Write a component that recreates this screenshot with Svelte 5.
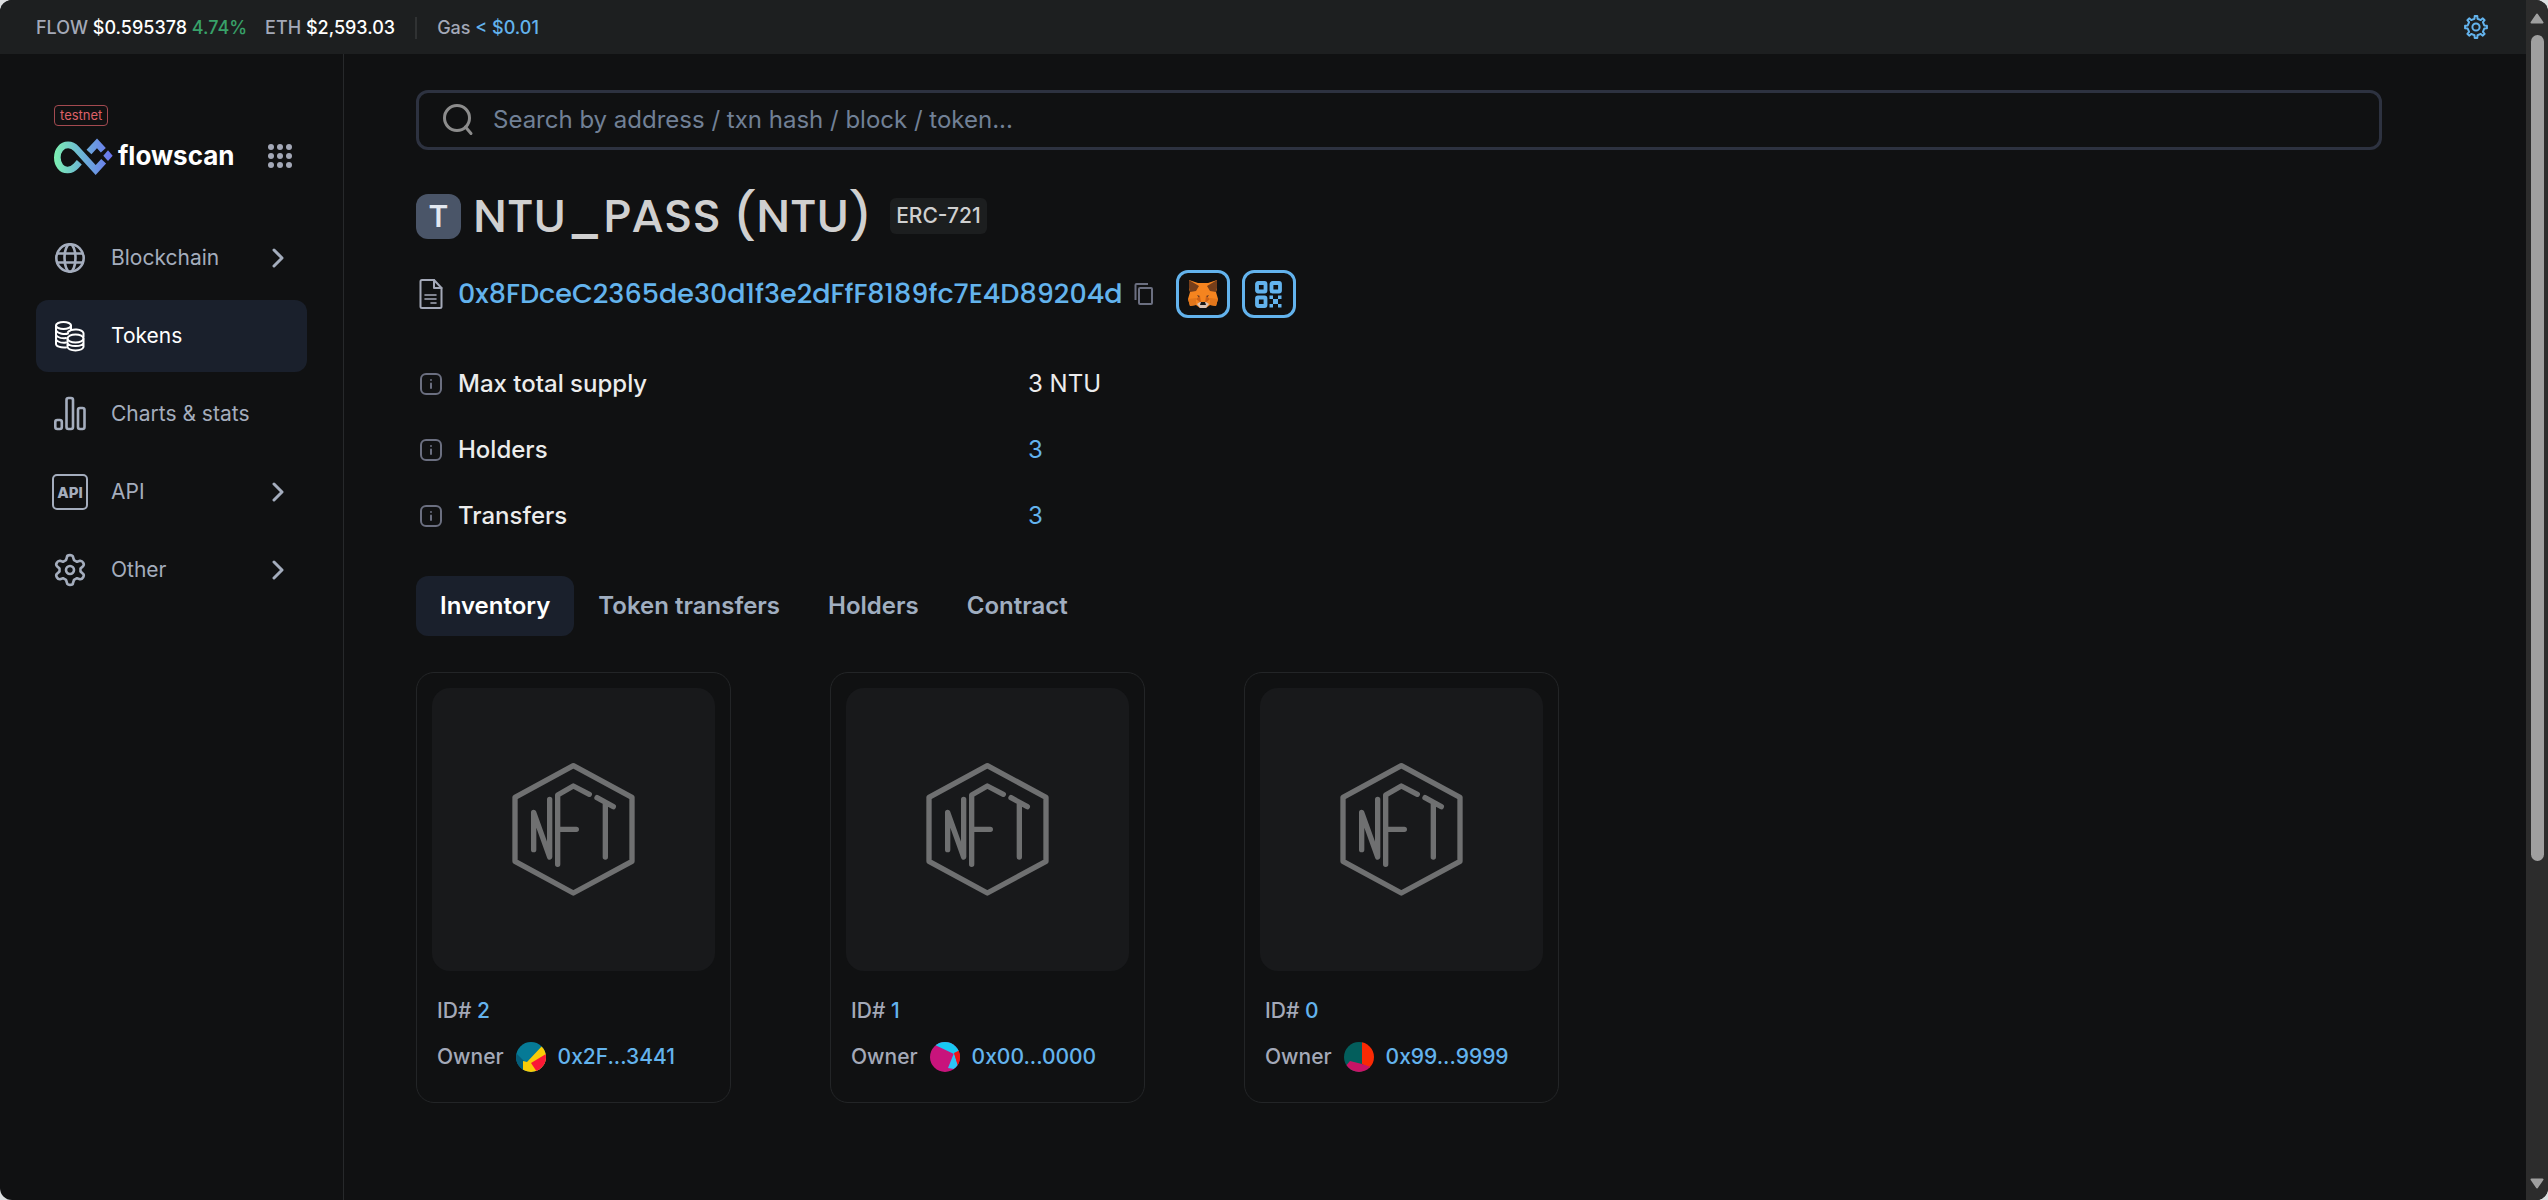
<script lang="ts">
	type NavItem = {
		label: string;
		icon: string;
		expandable: boolean;
	};

	type Nft = {
		id: number;
		owner: string;
	};

	const NAV: NavItem[] = [
		{ label: 'Blockchain', icon: 'globe', expandable: true },
		{ label: 'Tokens', icon: 'coins', expandable: false },
		{ label: 'Charts & stats', icon: 'chart', expandable: false },
		{ label: 'API', icon: 'api', expandable: true },
		{ label: 'Other', icon: 'gear', expandable: true },
	];

	const DETAILS = [
		{ label: 'Max total supply', value: '3 NTU', link: false },
		{ label: 'Holders', value: '3', link: true },
		{ label: 'Transfers', value: '3', link: true },
	];

	const TABS = ['Inventory', 'Token transfers', 'Holders', 'Contract'];

	const ITEMS: Nft[] = [
		{ id: 2, owner: '0x2F...3441' },
		{ id: 1, owner: '0x00...0000' },
		{ id: 0, owner: '0x99...9999' },
	];

	const ADDRESS = '0x8FDceC2365de30d1f3e2dFfF8189fc7E4D89204d';

	let activeNav = $state('Tokens');
	let activeTab = $state('Inventory');
	let query = $state('');

	// Outline of a gear centred on 0,0. Half widths are fractions of one tooth's angle
	function gearPath(teeth: number, outer: number, inner: number, top: number, base: number): string {
		const step = (Math.PI * 2) / teeth;
		const points: string[] = [];
		for (let i = 0; i < teeth; i++) {
			const a = i * step - Math.PI / 2;
			for (const [r, k] of [[inner, -base], [outer, -top], [outer, top], [inner, base]]) {
				const t = a + k * step;
				points.push(`${(r * Math.cos(t)).toFixed(2)} ${(r * Math.sin(t)).toFixed(2)}`);
			}
		}
		return `M${points.join('L')}Z`;
	}

	const cog = gearPath(8, 11, 8.4, 0.15, 0.23);
</script>

<div class="window">
	<div class="page">
		<header class="topbar">
			<div class="prices">
				<span>FLOW <b>$0.595378</b> <em>4.74%</em></span>
				<span>ETH <b>$2,593.03</b></span>
				<i class="divider"></i>
				<span>Gas <a href="#gas">&lt; $0.01</a></span>
			</div>
			<button class="plain settings" aria-label="Settings">
				<svg viewBox="-12 -12 24 24" width="24" height="24" fill="none" stroke="currentColor" stroke-width="2" stroke-linejoin="round">
					<path d={cog} />
					<circle r="3.6" />
				</svg>
			</button>
		</header>

		<div class="body">
			<aside class="sidebar">
				<span class="network">testnet</span>
				<div class="brand">
					<a class="logo" href="#home">
						<svg viewBox="42 112 180 111" width="60" height="37" fill="none" stroke="url(#flow)" stroke-width="20">
							<defs>
								<linearGradient id="flow" gradientUnits="userSpaceOnUse" x1="42" y1="170" x2="216" y2="170">
									<stop offset="0" stop-color="#7cf0b0" />
									<stop offset="0.5" stop-color="#6cb2d8" />
									<stop offset="1" stop-color="#6a74f0" />
								</linearGradient>
							</defs>
							<path d="M118 185 L108 196 C94 211 72 212 61 198 C49 183 49 158 61 144 C73 129 95 129 109 144 L167 208 L191 182" />
							<path d="M147 154 L171 128 L190 149" />
							<path d="M204 149 L218 165 L204 181 L190 165Z" fill="url(#flow)" stroke="none" />
						</svg>
						<span>flowscan</span>
					</a>
					<button class="plain apps" aria-label="Apps">
						<svg viewBox="0 0 24 24" width="24" height="24" fill="currentColor">
							{#each [3, 12, 21] as y}
								{#each [3, 12, 21] as x}
									<circle cx={x} cy={y} r="3" />
								{/each}
							{/each}
						</svg>
					</button>
				</div>

				<nav>
					{#each NAV as item}
						<a
							class="nav-item"
							class:active={activeNav === item.label}
							href="#{item.icon}"
							onclick={() => (activeNav = item.label)}
						>
							<svg class="nav-icon" viewBox="-18 -18 36 36" width="36" height="36" fill="none" stroke="currentColor" stroke-width="2" stroke-linejoin="round" stroke-linecap="round">
								{#if item.icon === 'globe'}
									<g stroke-width="2.6">
										<circle r="13.7" />
										<ellipse rx="5.500" ry="13.7" />
										<path d="M-12.500 -4.500H12.500M-12.500 4.500H12.500" />
									</g>
								{:else if item.icon === 'coins'}
									<ellipse cx="-6.5" cy="-10.5" rx="7.5" ry="3.5" />
									<path d="M-14 -10.5V8C-14 10 -10 12 -4 11.500M1 -10.500V-6M-14 -5.500C-12 -2 -5 -1.500 -2 -2.500M-14 -1C-12 2 -7 2.500 -4 2M-14 3.500C-12 6.500 -7 7 -4 6.500" />
									<path d="M-2 -4C2 -8 12 -7 13.500 -3V1" />
									<ellipse cx="5.500" cy="2.500" rx="8" ry="4" />
									<path d="M-2.500 3V11C-1 15.500 12 15.500 13.500 11V3M-2.500 7C-1 11 12 11 13.500 7" />
								{:else if item.icon === 'chart'}
									<g stroke-width="2.6">
										<rect x="-14.700" y="6" width="6.500" height="9" rx="2" />
										<rect x="-3.500" y="-16" width="6.500" height="31" rx="2" />
										<rect x="8" y="-6" width="6.500" height="21" rx="2" />
									</g>
								{:else if item.icon === 'api'}
									<rect x="-17" y="-17" width="34" height="34" rx="4" />
									<text x="0" y="6" text-anchor="middle">API</text>
								{:else}
									<g stroke-width="2.6">
										<path d="M-3 -13C-3 -15.500 3 -15.500 3 -13L4 -9.800L7 -8.200L10 -9.200C12.500 -9.500 15 -5.500 13 -3.800L10.500 -1.500V1.500L13 3.800C15 5.500 12.500 9.500 10 9.200L7 8.200L4 9.800L3 13C3 15.500 -3 15.500 -3 13L-4 9.800L-7 8.200L-10 9.200C-12.500 9.500 -15 5.500 -13 3.800L-10.500 1.500V-1.500L-13 -3.800C-15 -5.500 -12.500 -9.500 -10 -9.200L-7 -8.200L-4 -9.800Z" />
										<circle r="4" />
									</g>
								{/if}
							</svg>
							<span>{item.label}</span>
							{#if item.expandable}
								<svg class="chevron" viewBox="0 0 12 20" width="12" height="20" fill="none" stroke="currentColor" stroke-width="3" stroke-linecap="round" stroke-linejoin="round">
									<path d="M2 2L10 10L2 18" />
								</svg>
							{/if}
						</a>
					{/each}
				</nav>
			</aside>

			<main>
				<label class="search">
					<svg viewBox="0 0 32 32" width="32" height="32" fill="none" stroke="currentColor" stroke-width="3" stroke-linecap="round">
						<circle cx="15" cy="14" r="12.500" />
						<path d="M23.500 23L29 29.500" />
					</svg>
					<input
						type="text"
						bind:value={query}
						aria-label="Search"
						placeholder="Search by address / txn hash / block / token..."
					/>
				</label>

				<div class="title">
					<span class="token-letter">T</span>
					<h1>NTU_PASS (NTU)</h1>
					<span class="standard">ERC-721</span>
				</div>

				<div class="address">
					<svg class="doc" viewBox="0 0 24 32" width="24" height="32" fill="none" stroke="currentColor" stroke-width="2" stroke-linejoin="round" stroke-linecap="round">
						<path d="M15 2H3Q1.500 2 1.500 3.500V28.500Q1.500 30 3 30H21Q22.500 30 22.500 28.500V10Z" />
						<path d="M15 2V10H22.500" />
						<path d="M6 17H17M6 21H17M12 25H17" stroke-width="1.600" />
					</svg>
					<a href="#address">{ADDRESS}</a>
					<button class="plain copy" aria-label="Copy address">
						<svg viewBox="0 0 20 24" width="20" height="24" fill="none" stroke="currentColor" stroke-width="2" stroke-linejoin="round">
							<rect x="5" y="6" width="13" height="16" rx="1" />
							<path d="M1.500 18V3Q1.500 2 2.500 2H14" />
						</svg>
					</button>
					<button class="outlined" aria-label="Add token to MetaMask">
						<svg viewBox="0 0 30 30" width="30" height="30">
							<path d="M1 1L10 4H20L29 1L29 10L28 13L30 20L28 27L22 26L18 29H12L8 26L2 27L0 20L2 13L1 10Z" fill="#f5841f" />
							<path d="M1 1L11 7L8 12L2 13L1 9ZM29 1L19 7L22 12L28 13L29 9Z" fill="#763e1a" />
							<path d="M0 20L8 19L8 26L2 27ZM30 20L22 19L22 26L28 27Z" fill="#e2761b" />
							<path d="M9 16L12 17L11 19ZM21 16L18 17L19 19Z" fill="#5d3b2b" />
							<path d="M12 17L13 24L8 20ZM18 17L17 24L22 20Z" fill="#cd6116" />
							<path d="M9 25L12 23H18L21 25L18 29H12Z" fill="#d7c1b3" />
							<path d="M13 23H17L18 26H12Z" fill="#161616" />
						</svg>
					</button>
					<button class="outlined" aria-label="Show QR code">
						<svg viewBox="0 0 27 27" width="27" height="27" fill="none" stroke="currentColor" stroke-width="3.8">
							<rect x="2" y="2" width="8.500" height="8.500" rx="1" />
							<rect x="16.500" y="2" width="8.500" height="8.500" rx="1" />
							<rect x="2" y="16.500" width="8.500" height="8.500" rx="1" />
							<path d="M14.500 14.500h3.500v3.500h-3.500zM18 18h5v5h-5zM23 14.500h3.500v3.500h-3.500zM14.500 23h3.500v3.500h-3.500zM23 23h3.500v3.500h-3.500z" fill="currentColor" stroke="none" />
						</svg>
					</button>
				</div>

				<dl>
					{#each DETAILS as row}
						<dt>
							<svg viewBox="0 0 24 24" width="24" height="24" fill="none" stroke="currentColor" stroke-width="2" stroke-linecap="round">
								<rect x="2" y="2" width="20" height="20" rx="5" />
								<path d="M12 11.500V16M12 8V8.100" />
							</svg>
							{row.label}
						</dt>
						<dd>
							{#if row.link}<a href="#{row.label}">{row.value}</a>{:else}{row.value}{/if}
						</dd>
					{/each}
				</dl>

				<div class="tabs" role="tablist">
					{#each TABS as tab}
						<button role="tab" aria-selected={activeTab === tab} onclick={() => (activeTab = tab)}>
							{tab}
						</button>
					{/each}
				</div>

				<div class="inventory">
					{#each ITEMS as item}
						<article>
							<a class="preview" href="#nft-{item.id}" aria-label="Token {item.id}">
								<svg viewBox="330 300 381 417" width="127" height="139" fill="none" stroke="currentColor" stroke-width="16" stroke-linecap="round" stroke-linejoin="round">
									<path d="M520 317L696 412V604L520 699L345 604V412Z" />
									<path d="M401 569V457L449 591V418" />
									<path d="M473 613V405L520 378L568 403M473 508H529" />
									<path d="M591 413L640 440M616 431V591" />
								</svg>
							</a>
							<p>ID# <a href="#nft-{item.id}">{item.id}</a></p>
							<p class="owner">
								Owner
								<svg class="avatar" viewBox="0 0 30 30" width="30" height="30">
									{#if item.id === 2}
										<path d="M0 0H30V30H0Z" fill="#067a96" />
										<path d="M0 11L8 19L8 30H0Z" fill="#055c78" />
										<path d="M7 19L11 20L27 3L30 8V30H7Z" fill="#f8cc08" />
										<path d="M15 21L30 12V30H21Z" fill="#fb1836" />
									{:else if item.id === 1}
										<path d="M0 0H30V30H0Z" fill="#c8147c" />
										<path d="M5 0H30V9L24 12L5 3Z" fill="#18c8f2" />
										<path d="M24 11L28 24L24 27L18 26Z" fill="#2cc4f6" />
										<path d="M24 11L30 8V23L28 24Z" fill="#ee1414" />
									{:else}
										<path d="M0 0H18V30H0Z" fill="#035e5c" />
										<path d="M18 0H30V30L18 22Z" fill="#fa2a04" />
										<path d="M6 19L18 22L27 25L24 30H0V26Z" fill="#c81465" />
									{/if}
								</svg>
								<a href="#owner-{item.id}">{item.owner}</a>
							</p>
						</article>
					{/each}
				</div>
			</main>
		</div>
	</div>

	<div class="scrollbar" aria-hidden="true">
		<svg viewBox="0 0 14 11" width="14" height="11"><path d="M7 1.500L12.500 9.500H1.500Z" /></svg>
		<div class="track"><div class="thumb"></div></div>
		<svg viewBox="0 0 14 11" width="14" height="11"><path d="M7 9.500L12.500 1.500H1.500Z" /></svg>
	</div>
</div>

<style>
	:global(body) {
		background: #dcdfe1;
	}

	.window {
		display: flex;
		min-height: 100vh;
		border-radius: 12px;
		overflow: hidden;
		background: #101112;
		color: #a0aec0;
		font-family: Inter, 'Liberation Sans', sans-serif;
		font-size: 24px;
		line-height: 36px;
	}

	.window * {
		box-sizing: border-box;
	}

	a {
		color: #63b3ed;
		text-decoration: none;
	}

	svg {
		display: block;
		flex: none;
	}

	button {
		font: inherit;
		cursor: pointer;
	}

	.plain {
		padding: 0;
		border: 0;
		background: none;
		color: inherit;
	}

	.page {
		flex: 1;
		min-width: 0;
		display: flex;
		flex-direction: column;
	}

	.topbar {
		display: flex;
		align-items: center;
		justify-content: space-between;
		height: 54px;
		padding: 0 38px 0 36px;
		background: #1d1f20;
	}

	.prices {
		display: flex;
		align-items: center;
		gap: 18px;
		padding-top: 2px;
		font-size: 18px;
		line-height: 24px;
		font-weight: 500;
		color: #a4a9b8;
	}

	.prices b {
		font-weight: 500;
		color: #fff;
	}

	.prices em {
		font-style: normal;
		color: #38a169;
	}

	.divider {
		width: 2px;
		height: 22px;
		margin: 0 2px;
		background: #303233;
	}

	.settings {
		color: #63b3ed;
	}

	.body {
		flex: 1;
		display: flex;
	}

	.sidebar {
		flex: none;
		width: 344px;
		padding: 51px 36px 0;
		border-right: 1px solid #27292b;
	}

	.network {
		display: block;
		width: fit-content;
		margin-left: 18px;
		padding: 0 5px;
		border: 1px solid #a34a50;
		border-radius: 4px;
		font-size: 13px;
		line-height: 19px;
		color: #dd6068;
	}

	.brand {
		display: flex;
		align-items: center;
		justify-content: space-between;
		height: 36px;
		margin: 12px 15px 48px 18px;
	}

	.logo {
		display: flex;
		align-items: center;
		gap: 4px;
		font-size: 26px;
		font-weight: 700;
		color: #fff;
	}

	.apps {
		color: #a4a9b8;
	}

	nav {
		display: flex;
		flex-direction: column;
		gap: 6px;
	}

	.nav-item {
		display: flex;
		align-items: center;
		height: 72px;
		padding: 0 23px 0 16px;
		border-radius: 12px;
		font-size: 21px;
		line-height: 30px;
		color: #a4adbd;
	}

	.nav-item.active {
		background: #1a202c;
		color: #fff;
	}

	.nav-icon {
		margin-right: 23px;
	}

	.nav-icon text {
		font-size: 15px;
		font-weight: 800;
		fill: currentColor;
		stroke: none;
	}

	.chevron {
		margin-left: auto;
	}

	main {
		flex: 1;
		min-width: 0;
		padding: 36px 144px 36px 72px;
	}

	.search {
		display: flex;
		align-items: center;
		gap: 19px;
		height: 60px;
		padding: 0 23px;
		border: 3px solid #2d3240;
		border-radius: 12px;
		color: #8c8c8c;
	}

	.search input {
		flex: 1;
		min-width: 0;
		padding: 0;
		border: 0;
		outline: 0;
		background: none;
		font: inherit;
		color: #fff;
	}

	.search input::placeholder {
		color: #718096;
		opacity: 1;
	}

	.title {
		display: flex;
		align-items: center;
		height: 60px;
		margin-top: 36px;
	}

	.token-letter {
		width: 45px;
		border-radius: 12px;
		background: #4a5568;
		font-size: 30px;
		line-height: 45px;
		font-weight: 600;
		text-align: center;
		color: #e2e8f0;
	}

	h1 {
		margin: 0 18px 0 12px;
		font-family: Poppins, Inter, sans-serif;
		font-size: 47px;
		line-height: 60px;
		font-weight: 500;
		color: #d0d0d0;
	}

	.standard {
		padding: 0 6px;
		border-radius: 6px;
		background: #1c1e1f;
		font-size: 21px;
		line-height: 36px;
		font-weight: 500;
		color: #d0d0d0;
	}

	.address {
		display: flex;
		align-items: center;
		height: 48px;
		margin-top: 24px;
		padding-left: 3px;
		color: #a4a9b8;
	}

	.address a {
		margin: 0 11px 0 15px;
		font-family: Poppins, Inter, sans-serif;
		font-size: 27px;
		font-weight: 500;
	}

	.copy {
		margin-right: 10px;
		color: #6b6f80;
	}

	.outlined {
		display: flex;
		align-items: center;
		justify-content: center;
		width: 54px;
		height: 48px;
		margin-left: 12px;
		padding: 0;
		border: 3px solid #63b3ed;
		border-radius: 12px;
		background: none;
		color: #63b3ed;
	}

	dl {
		display: grid;
		grid-template-columns: 612px 1fr;
		row-gap: 30px;
		margin: 48px 0 42px;
	}

	dt {
		display: flex;
		align-items: center;
		gap: 15px;
		padding-left: 3px;
		font-weight: 500;
		color: #ececec;
	}

	dt svg {
		color: #6b6f80;
	}

	dd {
		margin: 0;
		color: #ececec;
	}

	.tabs {
		display: flex;
		margin-bottom: 36px;
	}

	.tabs button {
		height: 60px;
		padding: 0 24px;
		border: 0;
		border-radius: 12px;
		background: none;
		font-weight: 600;
		color: #a0aec0;
	}

	.tabs button[aria-selected='true'] {
		background: #1a202c;
		color: #fff;
	}

	.inventory {
		display: grid;
		grid-template-columns: repeat(auto-fill, 315px);
		gap: 36px 99px;
	}

	article {
		padding: 15px 15px 27px;
		border: 1px solid #232527;
		border-radius: 18px;
		font-size: 21px;
		line-height: 36px;
		font-weight: 500;
		color: #a4a9b8;
	}

	.preview {
		display: flex;
		align-items: center;
		justify-content: center;
		aspect-ratio: 1;
		margin-bottom: 22px;
		border-radius: 18px;
		background: #18191b;
		color: #6f7071;
	}

	article p {
		margin: 0 5px;
	}

	article .owner {
		display: flex;
		align-items: center;
		gap: 12px;
		margin-top: 10px;
	}

	.avatar {
		border-radius: 50%;
	}

	.scrollbar {
		display: flex;
		flex-direction: column;
		align-items: center;
		gap: 11px;
		width: 22px;
		padding: 13px 0 11px;
		background: #2c2c2c;
		fill: #9f9f9f;
	}

	.scrollbar path {
		stroke: #9f9f9f;
		stroke-width: 2;
		stroke-linejoin: round;
	}

	.track {
		flex: 1;
	}

	.thumb {
		width: 13px;
		height: 73%;
		border-radius: 7px;
		background: #9f9f9f;
	}
</style>
